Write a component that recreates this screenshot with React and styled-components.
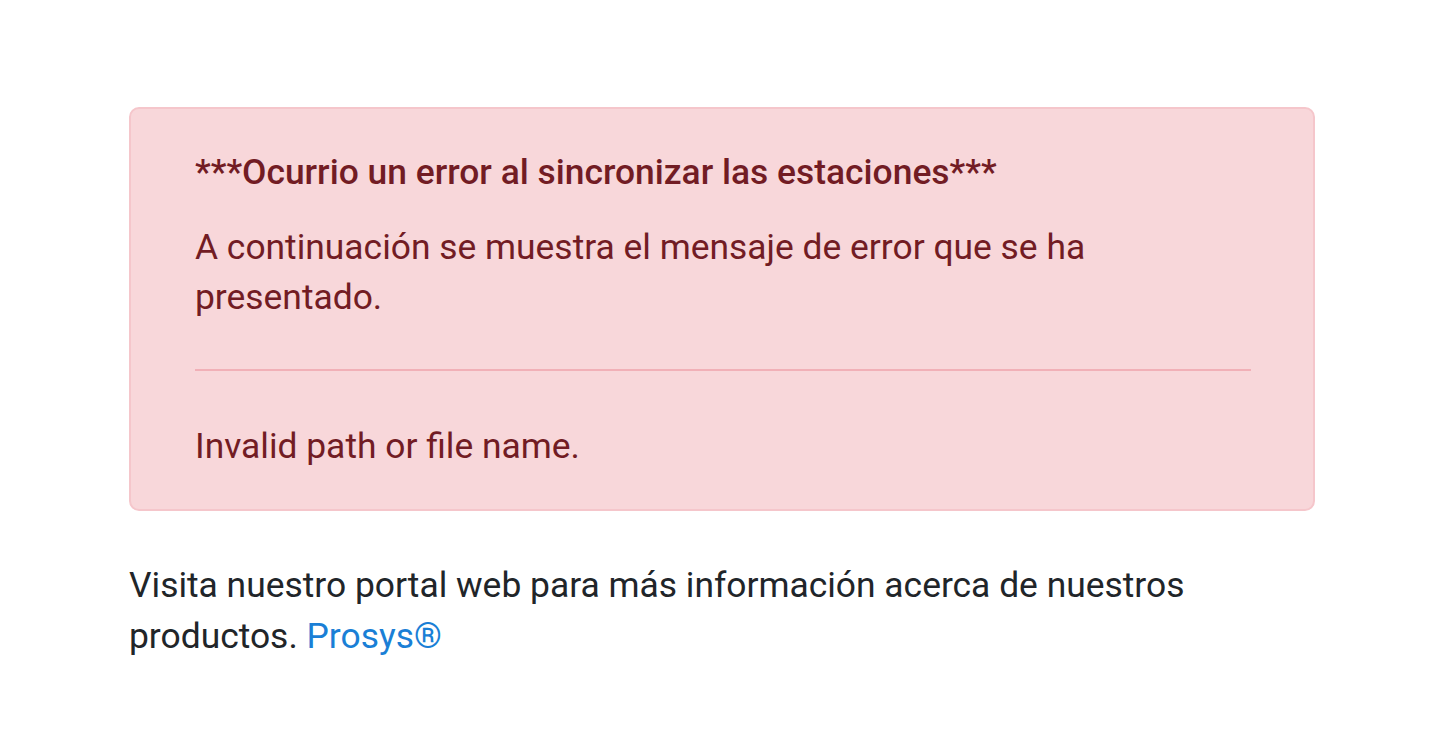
import React from "react";
import styled, { createGlobalStyle } from "styled-components";

const Global = createGlobalStyle`
  html, body { margin: 0; padding: 0; background: #ffffff; }
  body { font-family: Roboto, "Noto Sans", "Liberation Sans", sans-serif; color: #212529; }
`;

const Page = styled.main`
  padding: 107px 124px 40px 129px;
`;

const Alert = styled.section`
  background: #f8d7da;
  border: 2px solid #f5c6cb;
  border-radius: 10px;
  color: #721c24;
  padding: 38px 62px 38px 64px;
`;

const Heading = styled.h4`
  margin: 0 0 25px;
  font-size: 35.4px;
  line-height: 50px;
  font-weight: 500;
`;

const Text = styled.p`
  margin: 0;
  font-size: 35.4px;
  line-height: 50px;
  font-weight: 400;
`;

const Divider = styled.hr`
  border: 0;
  border-top: 2px solid #f1b0b7;
  margin: 47px 0 50px;
`;

const Footer = styled.p`
  margin: 49px 0 0;
  font-size: 35.4px;
  line-height: 51px;
  color: #212529;
`;

const Link = styled.a`
  color: #1a7fd6;
  text-decoration: none;
`;

export default function App() {
  return (
    <>
      <Global />
      <Page>
        <Alert role="alert">
          <Heading>***Ocurrio un error al sincronizar las estaciones***</Heading>
          <Text>A continuación se muestra el mensaje de error que se ha<br />presentado.</Text>
          <Divider />
          <Text>Invalid path or file name.</Text>
        </Alert>
        <Footer>
          Visita nuestro portal web para más información acerca de nuestros
          <br />
          productos. <Link href="#">Prosys®</Link>
        </Footer>
      </Page>
    </>
  );
}
